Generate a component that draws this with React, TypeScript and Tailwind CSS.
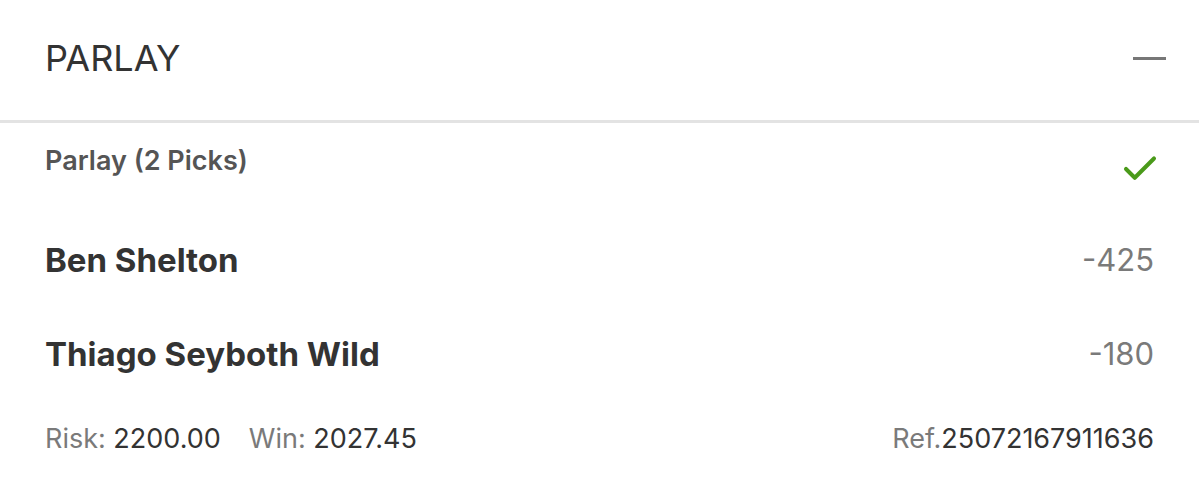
import { Check } from 'lucide-react'

interface Pick {
  name: string
  odds: string
}

const picks: Pick[] = [
  { name: 'Ben Shelton', odds: '-425' },
  { name: 'Thiago Seyboth Wild', odds: '-180' },
]

export default function App() {
  return (
    <div className="w-[1199px] h-[496px] bg-white text-[#333] font-['Inter',sans-serif]">
      <div className="flex items-center justify-between h-[120px] pl-[45px] pr-[33px] pb-[4px]">
        <h2 className="text-[36px] font-normal text-[#333]">PARLAY</h2>
        <div className="w-[33px] h-[3px] bg-[#777]" />
      </div>
      <div className="h-[3px] bg-[#e3e3e3]" />

      <div className="px-[45px] pt-[20px]">
        <div className="flex items-start justify-between h-[36px]">
          <span className="text-[27px] leading-[36px] font-semibold text-[#555]">Parlay (2 Picks)</span>
          <Check className="w-[42px] h-[42px] text-[#4a9a1a] mr-[-7px] mt-[5px]" strokeWidth={2.3} />
        </div>

        <div className="mt-[61px] flex flex-col gap-[54px]">
          {picks.map((pick) => (
            <div key={pick.name} className="flex items-center justify-between h-[40px]">
              <span className="text-[33px] leading-[40px] font-bold text-[#333]">{pick.name}</span>
              <span className="text-[31px] leading-[40px] text-[#7a7a7a]">{pick.odds}</span>
            </div>
          ))}
        </div>

        <div className="mt-[47px] flex items-center justify-between h-[36px] text-[27px] leading-[36px]">
          <div className="flex gap-[28px]">
            <span>
              <span className="text-[#7a7a7a]">Risk: </span>
              <span className="text-[#333]">2200.00</span>
            </span>
            <span>
              <span className="text-[#7a7a7a]">Win: </span>
              <span className="text-[#333]">2027.45</span>
            </span>
          </div>
          <span>
            <span className="text-[#7a7a7a]">Ref.</span>
            <span className="text-[#333]">25072167911636</span>
          </span>
        </div>
      </div>
    </div>
  )
}
